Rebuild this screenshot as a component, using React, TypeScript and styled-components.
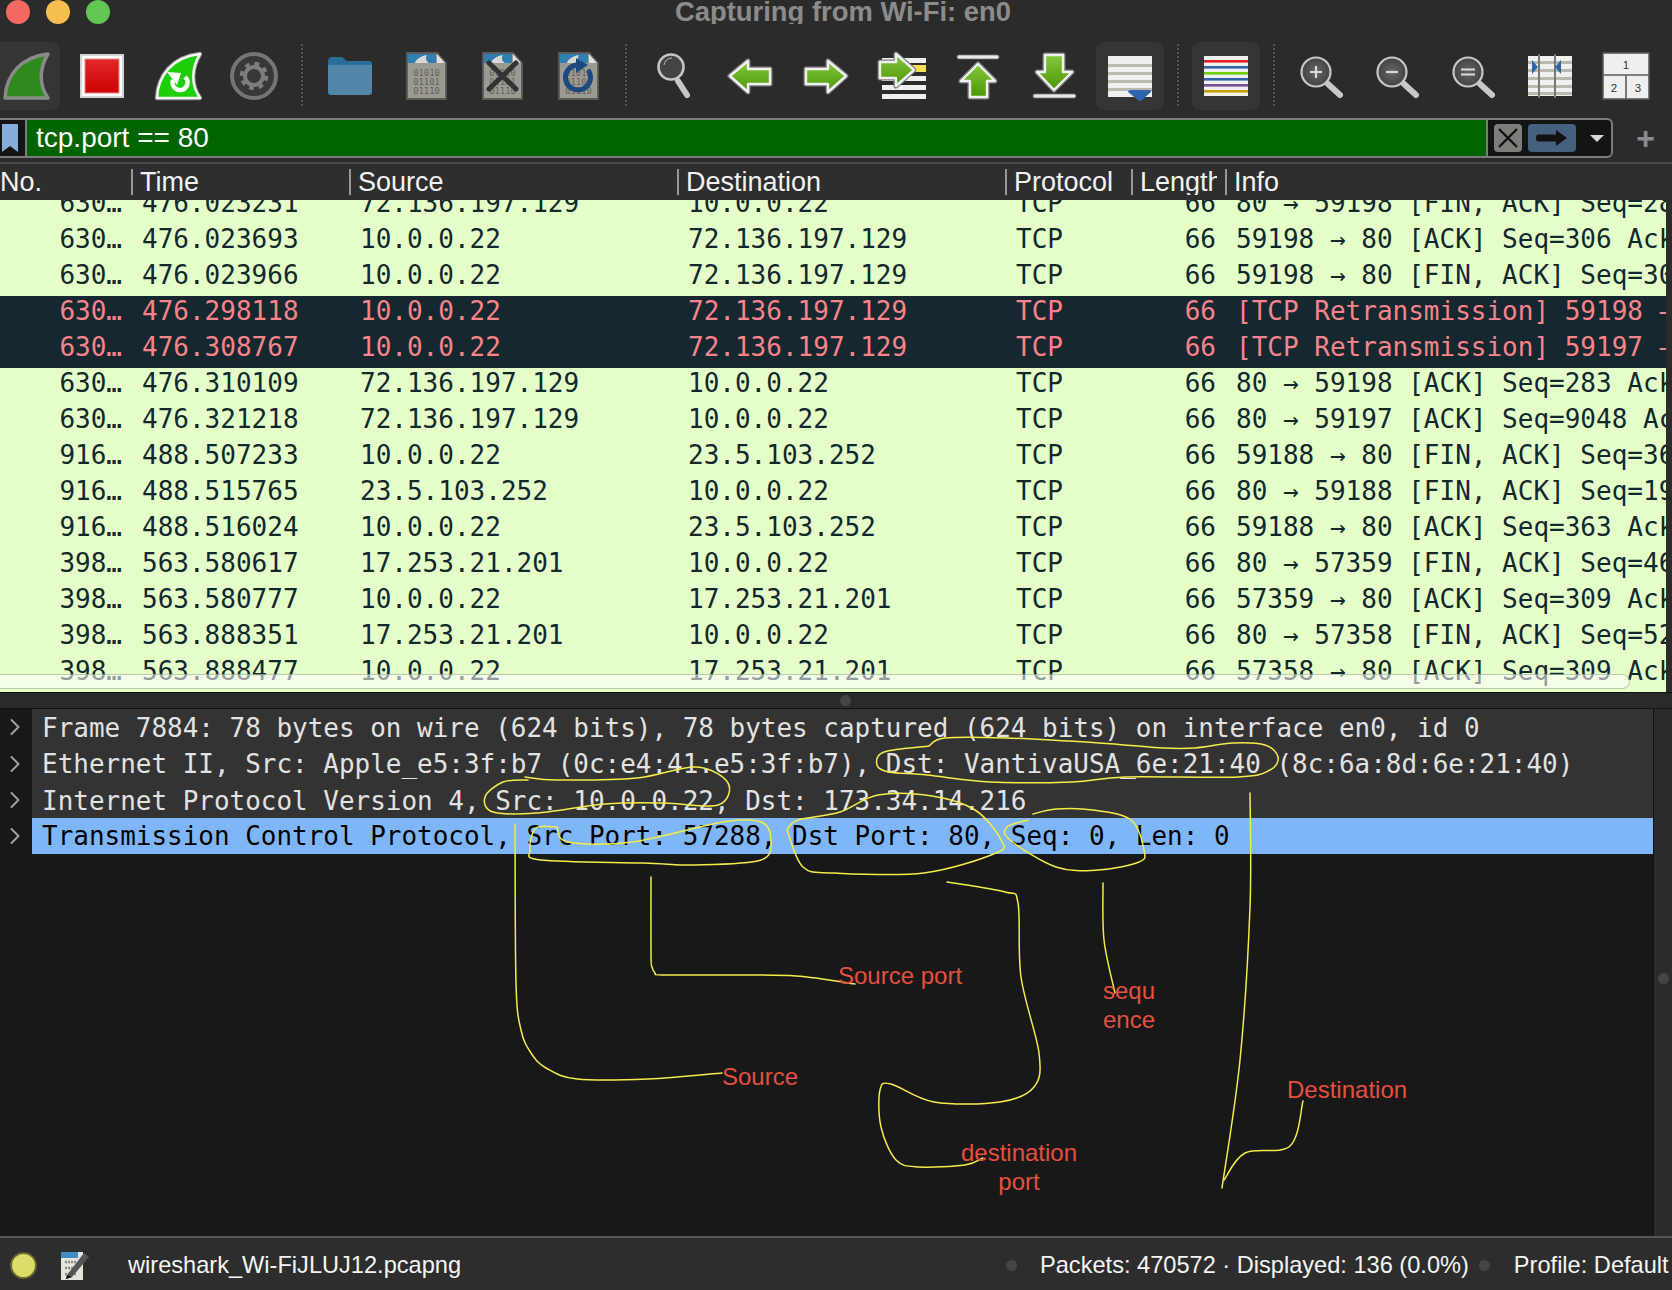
import React from "react";
import styled, { createGlobalStyle } from "styled-components";
import { ChevronRight } from "lucide-react";

const GlobalStyle = createGlobalStyle`
    html, body { margin: 0; padding: 0; background: #2b2b2b; }
    * { box-sizing: border-box; }
`;

const SANS = `"Liberation Sans", Arial, sans-serif`;
const MONO = `"DejaVu Sans Mono", "Liberation Mono", monospace`;

const Window = styled.div`
    position: relative;
    width: 1672px;
    height: 1290px;
    overflow: hidden;
    display: flex;
    flex-direction: column;
    background: #2b2b2b;
    font-family: ${SANS};
`;

/* title bar */
const TitleBar = styled.div`
    position: relative;
    height: 24px;
    flex: none;
    display: flex;
    align-items: center;
    gap: 16px;
    padding-left: 6px;
    overflow: hidden;
`;
const Light = styled.span<{ $color: string }>`
    width: 24px;
    height: 24px;
    border-radius: 50%;
    background: ${p => p.$color};
`;
const Title = styled.div`
    flex: 1;
    padding-right: 112px;
    text-align: center;
    color: #8b8b8b;
    font-size: 27.4px;
    font-weight: bold;
    line-height: 22px;
    white-space: nowrap;
`;

/* toolbar */
const Toolbar = styled.div`
    height: 68px;
    margin: 18px 0 8px -8px;
    flex: none;
    display: flex;
    gap: 8px;
`;
const ToolButton = styled.div<{ $on?: boolean }>`
    width: 68px;
    height: 68px;
    flex: none;
    display: flex;
    align-items: center;
    justify-content: center;
    border-radius: 8px;
    background: ${p => (p.$on ? "#353535" : "transparent")};
`;
const ToolSep = styled.div`
    width: 12px;
    flex: none;
    position: relative;
    &::after {
        content: "";
        position: absolute;
        left: 5px;
        top: 2px;
        bottom: 4px;
        border-left: 2px dotted #555;
    }
`;

/* filter */
const FilterRow = styled.div`
    height: 40px;
    flex: none;
    display: flex;
`;
const FilterBox = styled.div`
    width: 1613px;
    display: flex;
    border: solid #7c7c7c;
    border-width: 2px 2px 2px 0;
    border-radius: 0 6px 6px 0;
    background: #141414;
    overflow: hidden;
`;
const Bookmark = styled.div`
    width: 27px;
    flex: none;
    display: flex;
    align-items: center;
    padding-left: 2px;
    border-right: 2px solid #7c7c7c;
`;
const FilterText = styled.div`
    flex: 1;
    background: #006400;
    color: #fff;
    font-size: 28px;
    line-height: 36px;
    padding-left: 9px;
`;
const FilterActions = styled.div`
    width: 125px;
    flex: none;
    display: flex;
    align-items: center;
    gap: 6px;
    padding-left: 6px;
    border-left: 2px solid #7c7c7c;
`;
const ClearBtn = styled.div`
    width: 28px;
    height: 28px;
    border-radius: 4px;
    background: #7d7d7a;
    display: flex;
    align-items: center;
    justify-content: center;
`;
const ApplyBtn = styled.div`
    width: 48px;
    height: 28px;
    border-radius: 4px;
    background: #46607f;
    display: flex;
    align-items: center;
    justify-content: center;
`;
const DropArrow = styled.div`
    margin-left: 8px;
    width: 0;
    height: 0;
    border-left: 7px solid transparent;
    border-right: 7px solid transparent;
    border-top: 7px solid #d8d8d8;
`;
const PlusBtn = styled.div`
    flex: 1;
    display: flex;
    align-items: center;
    justify-content: center;
    padding-left: 6px;
    color: #8c8c8c;
    font-size: 32px;
    font-weight: bold;
    line-height: 36px;
`;

/* packet table */
const COLUMNS = "131px 218px 328px 328px 126px 94px 1fr";

const TableHeader = styled.div`
    height: 38px;
    margin-top: 4px;
    flex: none;
    display: grid;
    grid-template-columns: ${COLUMNS};
    align-items: center;
    border-top: 2px solid #484848;
    background: #2e2e2e;
    color: #f2f2f2;
    font-size: 27px;
`;
const HeaderCell = styled.div<{ $first?: boolean }>`
    height: 26px;
    line-height: 26px;
    padding: 0 8px 0 ${p => (p.$first ? 0 : 7)}px;
    border-left: ${p => (p.$first ? "none" : "2px solid #999")};
    white-space: nowrap;
`;
const HeaderLabel = styled.div`
    overflow: hidden;
`;
const PacketPane = styled.div`
    position: relative;
    height: 492px;
    flex: none;
    overflow: hidden;
    background: #e4ffc7;
    border-right: 6px solid #2b2b2b;
`;
const PacketList = styled.div`
    margin-top: -12px;
`;
const PacketRow = styled.div<{ $bad?: boolean }>`
    height: 36px;
    padding-bottom: 5px;
    display: grid;
    grid-template-columns: ${COLUMNS};
    align-items: center;
    background: ${p => (p.$bad ? "#15272f" : "#e4ffc7")};
    color: ${p => (p.$bad ? "#f8838a" : "#12272e")};
    font-family: ${MONO};
    font-size: 26px;
    line-height: 31px;
    white-space: nowrap;
`;
const Cell = styled.div<{ $right?: boolean }>`
    overflow: hidden;
    padding: ${p => (p.$right ? "0 9px 0 0" : "0 0 0 11px")};
    text-align: ${p => (p.$right ? "right" : "left")};
`;
const HScroll = styled.div`
    position: absolute;
    left: -8px;
    width: 1638px;
    bottom: 3px;
    height: 15px;
    border: 1px solid rgba(120, 140, 100, 0.45);
    border-radius: 8px;
    background: rgba(255, 255, 255, 0.55);
`;

/* splitter */
const Splitter = styled.div`
    height: 17px;
    flex: none;
    display: flex;
    align-items: center;
    justify-content: center;
    padding-left: 18px;
    background: #2a2a2a;
    border-top: 1px solid #111;
    border-bottom: 1px solid #111;
`;
const Grip = styled.span`
    width: 11px;
    height: 11px;
    border-radius: 50%;
    background: #454545;
`;

/* details */
const DetailPane = styled.div`
    flex: 1;
    display: flex;
    min-height: 0;
    background: #181818;
`;
const DetailTree = styled.div`
    flex: 1;
`;
const DetailRow = styled.div<{ $on?: boolean }>`
    height: ${p => (p.$on ? 36 : 36.4)}px;
    display: flex;
    align-items: center;
    color: ${p => (p.$on ? "#000" : "#e2e2e2")};
    font-family: ${MONO};
    font-size: 25.96px;
    white-space: pre;
`;
const Twisty = styled.div`
    width: 32px;
    flex: none;
    display: flex;
    justify-content: center;
    padding-right: 3px;
    color: #a4a4a4;
`;
const DetailText = styled.div<{ $on?: boolean }>`
    flex: 1;
    height: 100%;
    line-height: ${p => (p.$on ? 37 : 38)}px;
    padding-left: 10px;
    background: ${p => (p.$on ? "#7fb6f7" : "#333333")};
`;
const SideBar = styled.div`
    width: 19px;
    flex: none;
    background: #2b2b2b;
    border-left: 1px solid #111;
    display: flex;
    justify-content: center;
    padding-top: 264px;
`;
const SideGrip = styled.span`
    width: 11px;
    height: 11px;
    border-radius: 50%;
    background: #454545;
`;

/* status bar */
const StatusBar = styled.div`
    height: 54px;
    flex: none;
    display: flex;
    align-items: center;
    padding-top: 2px;
    border-top: 2px solid #555;
    background: #2d2d2d;
    color: #f4f4f4;
    font-size: 23.6px;
    white-space: nowrap;
`;
const Led = styled.span`
    width: 27px;
    height: 27px;
    margin-left: 10px;
    flex: none;
    border-radius: 50%;
    background: #dcdc68;
    border: 2px solid #66662f;
`;
const EditIcon = styled.span`
    width: 30px;
    height: 32px;
    margin-left: 23px;
    flex: none;
    display: flex;
`;
const CaptureName = styled.div`
    flex: 1;
    padding-left: 38px;
`;
const StatusRight = styled.div`
    width: 666px;
    flex: none;
    display: flex;
    align-items: center;
    overflow: hidden;
`;
const StatusDot = styled.span`
    width: 11px;
    height: 11px;
    flex: none;
    border-radius: 50%;
    background: #454545;
`;
const Packets = styled.span`
    margin: 0 10px 0 23px;
`;
const Profile = styled.span`
    margin-left: 24px;
`;

/* hand-drawn notes lying over the screenshot */
const InkLayer = styled.svg`
    position: absolute;
    left: 0;
    top: 0;
    pointer-events: none;
`;
const Note = styled.div<{ $x: number; $y: number; $center?: boolean }>`
    position: absolute;
    left: ${p => p.$x}px;
    top: ${p => p.$y}px;
    transform: ${p => (p.$center ? "translateX(-50%)" : "none")};
    color: #e5503f;
    font-size: 24px;
    line-height: 29px;
    text-align: center;
    white-space: pre;
`;

const Icon = styled.svg`
    display: block;
    overflow: visible;
`;

type P = [number, number];

// catmull-rom through the pen points, so the strokes stay soft
function ink(pts: P[]) {
    let d = `M${pts[0][0]} ${pts[0][1]}`;
    for (let i = 0; i < pts.length - 1; i++) {
        const a = pts[Math.max(i - 1, 0)];
        const b = pts[i];
        const c = pts[i + 1];
        const e = pts[Math.min(i + 2, pts.length - 1)];
        const c1x = b[0] + (c[0] - a[0]) / 6;
        const c1y = b[1] + (c[1] - a[1]) / 6;
        const c2x = c[0] - (e[0] - b[0]) / 6;
        const c2y = c[1] - (e[1] - b[1]) / 6;
        d += ` C${c1x.toFixed(1)} ${c1y.toFixed(1)} ${c2x.toFixed(1)} ${c2y.toFixed(1)} ${c[0]} ${c[1]}`;
    }
    return d;
}

const strokes: P[][] = [
    [[525, 777], [557, 780], [637, 778], [696, 767], [728, 783], [718, 805], [664, 803], [605, 804], [536, 813], [493, 812], [485, 797], [503, 782], [528, 780]],
    [[557, 827], [536, 828], [530, 850], [541, 860], [643, 863], [696, 865], [761, 860], [771, 840], [761, 822], [723, 822], [632, 842], [568, 842], [557, 827]],
    [[787, 830], [803, 867], [835, 873], [924, 873], [996, 853], [1001, 840], [975, 810], [932, 796], [878, 795], [840, 812], [798, 820], [787, 830]],
    [[1028, 820], [1007, 827], [1010, 840], [1056, 867], [1098, 870], [1139, 862], [1144, 850], [1131, 820], [1093, 810], [1056, 809], [1033, 814]],
    [[929, 746], [945, 738], [1007, 738], [1099, 743], [1163, 748], [1195, 748], [1233, 743], [1265, 745], [1278, 757], [1270, 770], [1238, 777], [1125, 777], [1072, 782], [991, 782], [927, 775], [889, 772], [877, 765], [884, 752], [929, 746]],
    [[515, 824], [516, 983], [521, 1030], [531, 1053], [546, 1068], [577, 1079], [648, 1079], [722, 1073]],
    [[651, 877], [651, 955], [652, 967], [655, 973], [662, 975], [720, 975], [796, 976], [855, 984]],
    [[947, 882], [1005, 892], [1018, 903], [1021, 977], [1039, 1053], [1034, 1087], [1000, 1102], [934, 1102], [891, 1084], [880, 1090], [881, 1127], [896, 1160], [919, 1167], [965, 1165], [983, 1158]],
    [[1103, 883], [1104, 940], [1115, 993]],
    [[1250, 793], [1250, 907], [1240, 1060], [1222, 1188]],
    [[1224, 1180], [1245, 1153], [1290, 1146], [1303, 1101]],
];

const Gradients = () => (
    <svg width="0" height="0" style={{ position: "absolute" }}>
        <defs>
            <linearGradient id="go" x1="0" y1="0" x2="0" y2="1">
                <stop offset="0" stopColor="#86c83e" />
                <stop offset="1" stopColor="#4c9606" />
            </linearGradient>
            <linearGradient id="red" x1="0" y1="0" x2="0" y2="1">
                <stop offset="0" stopColor="#e02a2a" />
                <stop offset="1" stopColor="#cc0000" />
            </linearGradient>
            <radialGradient id="lens" cx="0.5" cy="0.5" r="0.6">
                <stop offset="0" stopColor="#666" />
                <stop offset="1" stopColor="#3c3c3c" />
            </radialGradient>
        </defs>
    </svg>
);

const Box = ({ children }: { children: React.ReactNode }) => (
    <Icon width="48" height="48" viewBox="0 0 48 48">{children}</Icon>
);

const FIN = "M3 46 C4 24 18 5 46 2 C38 15 36 32 46 46 Z";

// green arrow: grey rim with a pale edge inside it
const Arrow = ({ d }: { d: string }) => (
    <>
        <path d={d} fill="none" stroke="#7e7e7e" strokeWidth="5" strokeLinejoin="round" />
        <path d={d} fill="url(#go)" stroke="#f0f0f0" strokeWidth="2.4" strokeLinejoin="round" />
    </>
);

const StartIcon = () => <Box><path d={FIN} fill="#2f8a1e" stroke="#8a8a8a" strokeWidth="3.5" strokeLinejoin="round" /></Box>;
const StopIcon = () => <Box><rect x="2" y="2" width="44" height="44" fill="#d4d4d4" /><rect x="4" y="4" width="40" height="40" fill="#fff" /><rect x="7" y="7" width="34" height="34" fill="url(#red)" stroke="#ea8a8a" strokeWidth="1" /></Box>;
const RestartIcon = () => (
    <Box>
        <path d={FIN} fill="#1dce08" stroke="#8a8a8a" strokeWidth="4.5" strokeLinejoin="round" />
        <path d={FIN} fill="#1dce08" stroke="#f4f4f4" strokeWidth="2.4" strokeLinejoin="round" />
        <path d="M31 25 A7.5 7.5 0 1 1 19 28" fill="none" stroke="#fff" strokeWidth="4.5" />
        <path d="M13 20 L27 21 L23 33 Z" fill="#fff" />
    </Box>
);
const OptionsIcon = () => (
    <Box>
        <circle cx="24" cy="24" r="22" fill="#383838" stroke="#757575" strokeWidth="4" />
        <circle cx="24" cy="24" r="12.2" fill="none" stroke="#7e7e7e" strokeWidth="4" strokeDasharray="4.7 4.9" />
        <circle cx="24" cy="24" r="9" fill="none" stroke="#7e7e7e" strokeWidth="4" />
    </Box>
);
const FolderIcon = () => (
    <Box>
        <path d="M2 10 Q2 5 6 5 L16 5 L21 9 L43 9 Q46 9 46 12 L46 20 L2 20 Z" fill="#2a6d99" />
        <path d="M2 13 L46 13 L46 40 Q46 43 43 43 L5 43 Q2 43 2 40 Z" fill="#5186a8" />
    </Box>
);
const BIN = ["01010", "01101", "01110"];
const FileBase = ({ children }: { children?: React.ReactNode }) => (
    <Box>
        <path d="M5 1 L35 1 L44 11 L44 47 L5 47 Z" fill="#9b9a91" stroke="#5a5a5a" strokeWidth="1.8" />
        <path d="M6 2 L34 2 L34 11 L6 11 Z" fill="#2f7fb0" />
        <path d="M13 11 C14 7 19 4 25 3 C23 6 24 9 27 11 Z" fill="#d8d8d4" />
        <path d="M35 2 L43 11 L35 11 Z" fill="#e0e0dc" />
        {BIN.map((b, i) => (
            <text key={b} x="24.5" y={24 + i * 9} textAnchor="middle" fontFamily={MONO} fontSize="8.8" fill="#62625c">{b}</text>
        ))}
        {children}
    </Box>
);
const FileClose = () => <FileBase><path d="M11 11 L38 37 M38 11 L11 37" stroke="#333" strokeWidth="5" strokeLinecap="round" /></FileBase>;
const FileReload = () => (
    <FileBase>
        <path d="M34 18 A12.5 12.5 0 1 1 23 13" fill="none" stroke="#1d4880" strokeWidth="5" />
        <path d="M22 6 L34 13 L22 21 Z" fill="#1d4880" />
    </FileBase>
);
const FindIcon = () => (
    <Box>
        <circle cx="21" cy="15" r="12.5" fill="#444" stroke="#c6c6c6" strokeWidth="2.6" />
        <path d="M14 13 A8 8 0 0 1 22 6" fill="none" stroke="#bbb" strokeWidth="1" />
        <path d="M28 29 L37 43" stroke="#c6c6c6" strokeWidth="6" strokeLinecap="round" />
    </Box>
);
const LEFT = "M4 24 L22 9 L22 17 L44 17 L44 32 L22 32 L22 40 Z";
const LeftIcon = () => <Box><Arrow d={LEFT} /></Box>;
const RightIcon = () => <Box><g transform="matrix(-1 0 0 1 48 0)"><Arrow d={LEFT} /></g></Box>;
const GotoIcon = () => (
    <Box>
        {[6, 15, 24, 33, 42].map(y => <rect key={y} x="4" y={y} width="44" height="5" fill="#efefef" />)}
        <rect x="34" y="13" width="14" height="7" fill="#f7e050" />
        <Arrow d="M2 10 L18 10 L18 2 L36 18 L18 34 L18 26 L2 26 Z" />
    </Box>
);
const TopIcon = () => (
    <Box>
        <rect x="3" y="3" width="42" height="4" rx="2" fill="#e8e8e8" stroke="#777" strokeWidth=".8" />
        <Arrow d="M24 12 L41 29 L33 29 L33 45 L16 45 L16 29 L7 29 Z" />
    </Box>
);
const BottomIcon = () => (
    <Box>
        <Arrow d="M15 3 L33 3 L33 20 L42 20 L24 38 L7 20 L15 20 Z" />
        <rect x="3" y="42" width="43" height="4" rx="2" fill="#e8e8e8" stroke="#777" strokeWidth=".8" />
    </Box>
);
const AutoScrollIcon = () => (
    <Box>
        <rect x="2" y="4" width="44" height="41" fill="#efefef" />
        {[12, 20, 28, 36].map(y => <rect key={y} x="2" y={y} width="44" height="3" fill="#b9b9b0" />)}
        <path d="M22 40 Q22 38 25 38 L43 38 Q46 38 45 40 L36 48 Q34 50 32 48 Z" fill="#2f66ab" />
    </Box>
);
const STRIPES = ["#e61e24", "#2f64a8", "#6fd00a", "#2f64a8", "#7a4e92", "#c8a000"];
const ColorizeIcon = () => (
    <Box>
        <rect x="2" y="4" width="44" height="40" fill="#f0f0f0" />
        {STRIPES.map((c, i) => <rect key={i} x="2" y={8 + i * 6} width="44" height="2.6" fill={c} />)}
    </Box>
);
const ZoomIcon = ({ mark }: { mark: string }) => (
    <Box>
        <circle cx="18" cy="20" r="14.5" fill="url(#lens)" stroke="#c8c8c8" strokeWidth="2.2" />
        <path d="M30 32 L42 43" stroke="#c8c8c8" strokeWidth="6" strokeLinecap="round" />
        <path d={mark} stroke="#dcdcdc" strokeWidth="2.2" fill="none" />
    </Box>
);
const ResizeIcon = () => (
    <Box>
        <rect x="2" y="4" width="44" height="40" fill="#f0f0f0" />
        {[9, 17, 25, 33, 40].map(y => <rect key={y} x="2" y={y} width="44" height="3" fill="#b9b9b0" />)}
        <rect x="12" y="2" width="2" height="44" fill="#777" />
        <rect x="28" y="2" width="2" height="44" fill="#777" />
        <path d="M6 8 L12 15 L6 22 Z M35 8 L29 15 L35 22 Z" fill="#2f66ab" />
    </Box>
);
const LayoutIcon = () => (
    <Box>
        <rect x="1" y="1" width="46" height="46" fill="#efefef" stroke="#5c5c5c" strokeWidth="1.6" />
        <path d="M1 23 L47 23 M24 23 L24 47" stroke="#5c5c5c" strokeWidth="1.6" />
        <text x="24" y="17" textAnchor="middle" fontFamily={SANS} fontSize="11.5" fill="#333">1</text>
        <text x="12" y="40" textAnchor="middle" fontFamily={SANS} fontSize="11.5" fill="#333">2</text>
        <text x="36" y="40" textAnchor="middle" fontFamily={SANS} fontSize="11.5" fill="#333">3</text>
    </Box>
);

const capture = [<StartIcon />, <StopIcon />, <RestartIcon />, <OptionsIcon />];
const files = [<FolderIcon />, <FileBase />, <FileClose />, <FileReload />];
const nav = [<FindIcon />, <LeftIcon />, <RightIcon />, <GotoIcon />, <TopIcon />, <BottomIcon />, <AutoScrollIcon />];
const view = [
    <ZoomIcon mark="M12 20 L24 20 M18 14 L18 26" />,
    <ZoomIcon mark="M12 20 L24 20" />,
    <ZoomIcon mark="M11 17.5 L25 17.5 M11 22.5 L25 22.5" />,
    <ResizeIcon />,
    <LayoutIcon />,
];

const columns = ["No.", "Time", "Source", "Destination", "Protocol", "Length", "Info"];

type Packet = [string, string, string, string, string, boolean?];
const A = "72.136.197.129";
const L = "10.0.0.22";
const B = "23.5.103.252";
const C = "17.253.21.201";
const packets: Packet[] = [
    ["630…", "476.023231", A, L, "80 → 59198 [FIN, ACK] Seq=282 Ack=306 Win=2048"],
    ["630…", "476.023693", L, A, "59198 → 80 [ACK] Seq=306 Ack=283 Win=2048"],
    ["630…", "476.023966", L, A, "59198 → 80 [FIN, ACK] Seq=306 Ack=283"],
    ["630…", "476.298118", L, A, "[TCP Retransmission] 59198 → 80 [FIN, ACK]", true],
    ["630…", "476.308767", L, A, "[TCP Retransmission] 59197 → 80 [FIN, ACK]", true],
    ["630…", "476.310109", A, L, "80 → 59198 [ACK] Seq=283 Ack=307 Win=2048"],
    ["630…", "476.321218", A, L, "80 → 59197 [ACK] Seq=9048 Ack=306 Win=2048"],
    ["916…", "488.507233", L, B, "59188 → 80 [FIN, ACK] Seq=362 Ack=190"],
    ["916…", "488.515765", B, L, "80 → 59188 [FIN, ACK] Seq=190 Ack=363"],
    ["916…", "488.516024", L, B, "59188 → 80 [ACK] Seq=363 Ack=191 Win=2048"],
    ["398…", "563.580617", C, L, "80 → 57359 [FIN, ACK] Seq=462 Ack=309"],
    ["398…", "563.580777", L, C, "57359 → 80 [ACK] Seq=309 Ack=463 Win=2048"],
    ["398…", "563.888351", C, L, "80 → 57358 [FIN, ACK] Seq=520 Ack=309"],
    ["398…", "563.888477", L, C, "57358 → 80 [ACK] Seq=309 Ack=521 Win=2048"],
];

const details = [
    "Frame 7884: 78 bytes on wire (624 bits), 78 bytes captured (624 bits) on interface en0, id 0",
    "Ethernet II, Src: Apple_e5:3f:b7 (0c:e4:41:e5:3f:b7), Dst: VantivaUSA_6e:21:40 (8c:6a:8d:6e:21:40)",
    "Internet Protocol Version 4, Src: 10.0.0.22, Dst: 173.34.14.216",
    "Transmission Control Protocol, Src Port: 57288, Dst Port: 80, Seq: 0, Len: 0",
];

export default function App() {
    return (
        <Window>
            <GlobalStyle />
            <Gradients />
            <TitleBar>
                <Light $color="#f4695f" />
                <Light $color="#f6bd4f" />
                <Light $color="#62c655" />
                <Title>Capturing from Wi-Fi: en0</Title>
            </TitleBar>

            <Toolbar>
                {capture.map((ic, i) => <ToolButton key={i} $on={i === 0}>{ic}</ToolButton>)}
                <ToolSep />
                {files.map((ic, i) => <ToolButton key={i}>{ic}</ToolButton>)}
                <ToolSep />
                {nav.map((ic, i) => <ToolButton key={i} $on={i === 6}>{ic}</ToolButton>)}
                <ToolSep />
                <ToolButton $on><ColorizeIcon /></ToolButton>
                <ToolSep />
                {view.map((ic, i) => <ToolButton key={i}>{ic}</ToolButton>)}
            </Toolbar>

            <FilterRow>
                <FilterBox>
                    <Bookmark>
                        <Icon width="16" height="28" viewBox="0 0 16 28">
                            <path d="M1 0 L15 0 Q16 0 16 1 L16 28 L8 22 L0 28 L0 1 Q0 0 1 0 Z" fill="#86aedc" />
                        </Icon>
                    </Bookmark>
                    <FilterText>tcp.port == 80</FilterText>
                    <FilterActions>
                        <ClearBtn>
                            <Icon width="22" height="22" viewBox="0 0 22 22">
                                <path d="M2 2 L20 20 M20 2 L2 20" stroke="#111" strokeWidth="2.4" />
                            </Icon>
                        </ClearBtn>
                        <ApplyBtn>
                            <Icon width="32" height="18" viewBox="0 0 32 18">
                                <path d="M2 5.5 L20 5.5 L20 1 L31 9 L20 17 L20 12.5 L2 12.5 Q0 12.5 0 9 Q0 5.5 2 5.5 Z" fill="#111" />
                            </Icon>
                        </ApplyBtn>
                        <DropArrow />
                    </FilterActions>
                </FilterBox>
                <PlusBtn>+</PlusBtn>
            </FilterRow>

            <TableHeader>
                {columns.map((c, i) => (
                    <HeaderCell key={c} $first={i === 0}>
                        <HeaderLabel>{c}</HeaderLabel>
                    </HeaderCell>
                ))}
            </TableHeader>

            <PacketPane>
                <PacketList>
                    {packets.map(([no, time, src, dst, info, bad]) => (
                        <PacketRow key={no + time} $bad={bad}>
                            <Cell $right>{no}</Cell>
                            <Cell>{time}</Cell>
                            <Cell>{src}</Cell>
                            <Cell>{dst}</Cell>
                            <Cell>TCP</Cell>
                            <Cell $right>66</Cell>
                            <Cell>{info}</Cell>
                        </PacketRow>
                    ))}
                </PacketList>
                <HScroll />
            </PacketPane>

            <Splitter><Grip /></Splitter>

            <DetailPane>
                <DetailTree>
                    {details.map((d, i) => (
                        <DetailRow key={d} $on={i === 3}>
                            <Twisty><ChevronRight size={28} strokeWidth={1.6} /></Twisty>
                            <DetailText $on={i === 3}>{d}</DetailText>
                        </DetailRow>
                    ))}
                </DetailTree>
                <SideBar><SideGrip /></SideBar>
            </DetailPane>

            <StatusBar>
                <Led />
                <EditIcon>
                    <Icon width="30" height="32" viewBox="0 0 30 32">
                        <path d="M1 3 L23 3 L23 31 L1 31 Z" fill="#e4e4dc" />
                        <path d="M1 3 L18 3 L18 9 L1 9 Z" fill="#3f8fc4" />
                        <path d="M5 13 L17 13 M5 19 L17 19 M5 25 L17 25" stroke="#8a8a84" strokeWidth="2.4" strokeDasharray="2 1" />
                        <path d="M7 26 L24 4 L29 8 L12 28 L6 30 Z" fill="#555" />
                        <path d="M7 26 L12 28 L6 30 Z" fill="#111" />
                    </Icon>
                </EditIcon>
                <CaptureName>wireshark_Wi-FiJLUJ12.pcapng</CaptureName>
                <StatusRight>
                    <StatusDot />
                    <Packets>Packets: 470572 · Displayed: 136 (0.0%)</Packets>
                    <StatusDot />
                    <Profile>Profile: Default</Profile>
                </StatusRight>
            </StatusBar>

            <InkLayer width="1672" height="1290" viewBox="0 0 1672 1290">
                {strokes.map((s, i) => (
                    <path key={i} d={ink(s)} fill="none" stroke="#f4ec4a" strokeWidth="1.5" strokeLinecap="round" />
                ))}
            </InkLayer>
            <Note $x={838} $y={961}>Source port</Note>
            <Note $x={722} $y={1062}>Source</Note>
            <Note $x={1103} $y={976}>{"sequ\nence"}</Note>
            <Note $x={1019} $y={1138} $center>{"destination\nport"}</Note>
            <Note $x={1287} $y={1075}>Destination</Note>
        </Window>
    );
}
